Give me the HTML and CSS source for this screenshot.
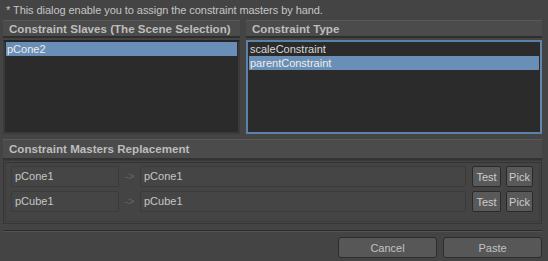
FILE: index.html
```html
<!DOCTYPE html>
<html>
<head>
<meta charset="utf-8">
<link rel="stylesheet" href="styles.css">
</head>
<body>
<div class="dialog">
  <div class="note">* This dialog enable you to assign the constraint masters by hand.</div>
  <div class="top-row">
    <div class="panel panel-left">
      <div class="panel-head">Constraint Slaves (The Scene Selection)</div>
      <div class="list">
        <div class="item selected">pCone2</div>
      </div>
    </div>
    <div class="panel panel-right">
      <div class="panel-head">Constraint Type</div>
      <div class="list list-focus">
        <div class="item">scaleConstraint</div>
        <div class="item selected">parentConstraint</div>
      </div>
    </div>
  </div>
  <div class="section-head">Constraint Masters Replacement</div>
  <div class="group">
    <div class="group-inner">
      <div class="row">
        <div class="field field-src">pCone1</div>
        <div class="arrow">-&gt;</div>
        <div class="field field-dst">pCone1</div>
        <button class="btn btn-test">Test</button>
        <button class="btn btn-pick">Pick</button>
      </div>
      <div class="row">
        <div class="field field-src">pCube1</div>
        <div class="arrow">-&gt;</div>
        <div class="field field-dst">pCube1</div>
        <button class="btn btn-test">Test</button>
        <button class="btn btn-pick">Pick</button>
      </div>
    </div>
  </div>
  <div class="separator"></div>
  <div class="actions">
    <button class="btn btn-main">Cancel</button>
    <button class="btn btn-main">Paste</button>
  </div>
</div>
</body>
</html>
```

FILE: styles.css
```css
html, body {
  margin: 0;
  padding: 0;
  background: #444444;
  width: 548px;
  height: 261px;
  overflow: hidden;
}

.dialog {
  font-family: "Liberation Sans", Arial, sans-serif;
  font-size: 11px;
  color: #c8c8c8;
  padding: 0 6px 0 3px;
}

.note {
  height: 20px;
  line-height: 13px;
  padding: 4px 0 0 3px;
  box-sizing: border-box;
  color: #c4c4c4;
  letter-spacing: -0.06px;
}

.top-row {
  display: flex;
  gap: 6px;
  height: 119px;
}

.panel {
  display: flex;
  flex-direction: column;
  gap: 2px;
}

.panel-left {
  width: 237px;
}

.panel-right {
  flex: 1;
}

.panel-head,
.section-head {
  height: 18px;
  box-sizing: border-box;
  background: #4b4b4b;
  border-top: 1px solid #585858;
  border-bottom: 2px solid #2e2e2e;
  font-weight: bold;
  color: #bdbdbd;
  padding-left: 6px;
  line-height: 15px;
  font-size: 11.6px;
}

.list {
  height: 94px;
  box-sizing: border-box;
  background: #2b2b2b;
  border: 2px solid #3a3a3a;
  border-top-color: #262626;
  padding: 0 1px;
}

.list-focus {
  border: 2px solid #5c81a8;
  border-right-color: #6386ab;
}

.item {
  height: 14px;
  line-height: 14px;
  padding-left: 1px;
  color: #d8d8d8;
}

.item.selected {
  background: #6a8fb6;
  color: #ececec;
}

.section-head {
  margin-top: 0;
  height: 21px;
  line-height: 17px;
  border-bottom: 2px solid #333333;
}

.group {
  margin-top: 0;
  height: 64px;
  box-sizing: border-box;
  border: 1px solid #363636;
  border-top-color: #3a3a3a;
  padding: 1px;
}

.group-inner {
  height: 100%;
  box-sizing: border-box;
  border: 1px solid #3c3c3c;
  border-top-color: #333333;
  padding: 3px 6px 0 5px;
  display: flex;
  flex-direction: column;
  gap: 4px;
}

.row {
  display: flex;
  align-items: stretch;
  height: 21px;
}

.field {
  box-sizing: border-box;
  background: #454545;
  border: 1px solid #3b3b3b;
  border-radius: 2px;
  color: #c6c6c6;
  line-height: 19px;
  padding-left: 3px;
}

.field-src {
  width: 108px;
}

.arrow {
  width: 21px;
  text-align: center;
  line-height: 21px;
  color: #666666;
}

.field-dst {
  flex: 1;
  margin-right: 6px;
}

.btn {
  font-family: "Liberation Sans", Arial, sans-serif;
  font-size: 11px;
  color: #cdcdcd;
  background: #595959;
  border: 1px solid #2a2a2a;
  border-radius: 2px;
  padding: 0;
  box-sizing: border-box;
  height: 21px;
}

.btn-test {
  width: 29px;
}

.btn-pick {
  width: 27px;
  margin-left: 5px;
}

.separator {
  margin-top: 6px;
  height: 1px;
  background: #2c2c2c;
  border-bottom: 1px solid #525252;
}

.actions {
  display: flex;
  justify-content: flex-end;
  gap: 6px;
  margin-top: 5px;
}

.btn-main {
  width: 99px;
  height: 21px;
  background: #575757;
  border-radius: 3px;
  border-color: #2c2c2c;
  color: #c2c2c2;
}
```
